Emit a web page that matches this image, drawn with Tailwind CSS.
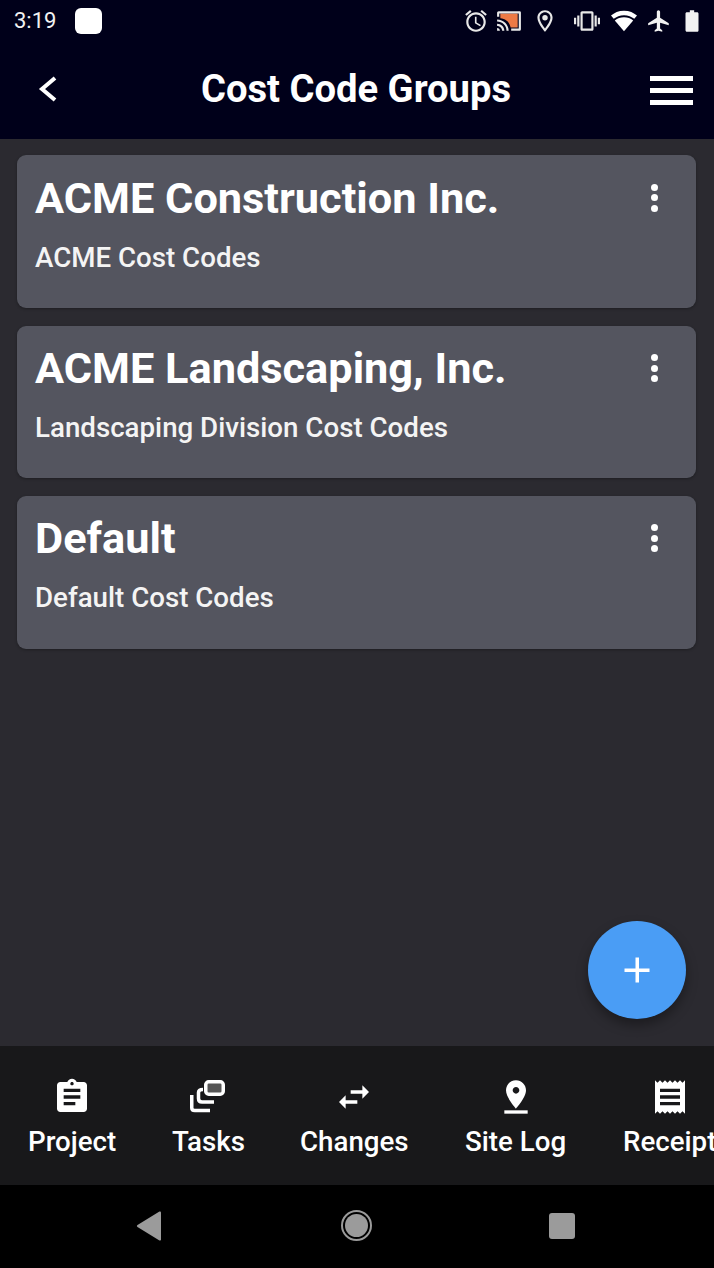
<!DOCTYPE html>
<html>
<head>
<meta charset="utf-8">
<script src="https://cdn.jsdelivr.net/npm/@tailwindcss/browser@4"></script>
</head>
<body class="m-0">
<div class="relative w-[714px] h-[1268px] overflow-hidden flex flex-col bg-[#2b2a30] font-['Roboto',sans-serif] text-white">
  <div class="h-[138.500px] bg-[#00001a] flex flex-col shrink-0">
    <div class="h-[42px] flex items-center pl-[14px] pr-[9px]">
      <span class="text-[22px] leading-none text-[#f2f2f2]">3:19</span>
      <span class="ml-[19px] w-[27px] h-[26px] rounded-[6px] bg-white"></span>
      <div class="ml-auto flex items-center">
        <svg class="w-[26px] h-[26px]" viewBox="0 0 24 24" fill="#e8e8e8"><path d="M22 5.700l-4.600-3.900-1.300 1.500 4.600 3.900L22 5.700zM7.900 3.400L6.600 1.900 2 5.700l1.300 1.500 4.600-3.800zM12.500 8H11v6l4.700 2.900.8-1.200-4-2.400V8zM12 4c-5 0-9 4-9 9s4 9 9 9 9-4 9-9-4-9-9-9zm0 16c-3.900 0-7-3.100-7-7s3.100-7 7-7 7 3.100 7 7-3.100 7-7 7z"/></svg>
        <svg class="w-[26px] h-[26px] ml-[7px]" viewBox="0 0 24 24"><path fill="#ee7a45" d="M4 5h16v13h-6.500C12.500 13 9 10 4 9.500z"/><path fill="#e8e8e8" d="M22 3H2.500C1.600 3 1 3.700 1 4.500V8h2V5h18v14h-7v2h7.500c.9 0 1.500-.7 1.500-1.500v-15C23 3.700 22.900 3 22 3zM1 18.500V21h2.600C3.600 19.600 2.500 18.500 1 18.500zm0-4v2c2.600 0 4.700 2 4.700 4.500h2C7.700 17.300 4.700 14.500 1 14.500zm0-4v2c4.800 0 8.700 3.800 8.700 8.500h2C11.700 15.200 6.900 10.500 1 10.500z"/></svg>
        <svg class="w-[26px] h-[26px] ml-[10px]" viewBox="0 0 24 24" fill="#e8e8e8"><path d="M12 2C8.100 2 5 5.100 5 9c0 5.200 7 13 7 13s7-7.800 7-13c0-3.900-3.100-7-7-7zM7 9c0-2.800 2.200-5 5-5s5 2.200 5 5c0 2.900-2.900 7.200-5 9.900C9.900 16.200 7 11.800 7 9z"/><circle cx="12" cy="9" r="2.500"/></svg>
        <svg class="w-[26px] h-[26px] ml-[16px]" viewBox="0 0 24 24" fill="#e8e8e8"><path d="M0 15h2V9H0v6zm3 2h2V7H3v10zm19-8v6h2V9h-2zm-3 8h2V7h-2v10zM16.500 3h-9C6.700 3 6 3.700 6 4.500v15c0 .8.700 1.500 1.500 1.500h9c.8 0 1.500-.7 1.500-1.500v-15c0-.8-.7-1.500-1.500-1.500zM16 19H8V5h8v14z"/></svg>
        <svg class="w-[26px] h-[26px] ml-[11px]" viewBox="0 0 24 24" fill="#ffffff"><path d="M12 21.500L20.500 11.500C18 9.500 15.300 8.500 12 8.500S6 9.500 3.500 11.500z"/><path fill-rule="evenodd" d="M12 2.500C7 2.500 3 4.300 0 7l2.500 3C5 7.900 8.300 6.600 12 6.600s7 1.300 9.500 3.400L24 7c-3-2.700-7-4.500-12-4.500z"/></svg>
        <svg class="w-[26px] h-[26px] ml-[9px]" viewBox="0 0 24 24" fill="#f2f2f2"><path d="M21 16v-2l-8-5V3.500c0-.8-.7-1.500-1.500-1.500S10 2.700 10 3.500V9l-8 5v2l8-2.500V19l-2 1.500V22l3.500-1 3.500 1v-1.500L13 19v-5.500l8 2.500z"/></svg>
        <svg class="w-[26px] h-[26px] ml-[7px]" viewBox="0 0 24 24" fill="#f2f2f2"><path d="M16.700 4H14V2h-4v2H7.300C6.600 4 6 4.600 6 5.300v15.300C6 21.400 6.600 22 7.300 22h9.400c.8 0 1.300-.6 1.300-1.300V5.300C18 4.600 17.400 4 16.700 4z"/></svg>
      </div>
    </div>
    <div class="relative flex-1 flex items-center justify-center pb-[3px] pr-[2px]">
      <svg class="absolute left-[36px] top-[33px] w-[24px] h-[28px]" viewBox="0 0 24 28" fill="none" stroke="#fff" stroke-width="4"><path d="M19 3L6 14l13 11"/></svg>
      <h1 class="text-[38.200px] leading-none font-bold">Cost Code Groups</h1>
      <div class="absolute left-[650px] top-[34px] w-[43px] flex flex-col gap-[7px]">
        <span class="h-[5px] bg-white block"></span>
        <span class="h-[5px] bg-white block"></span>
        <span class="h-[5px] bg-white block"></span>
      </div>
    </div>
  </div>

  <div class="flex-1 flex flex-col gap-[18px] pt-[16.500px] pl-[17px] pr-[18px]">
    <div class="relative h-[152.500px] bg-[#54555f] rounded-[9px] shadow-[0_1px_3px_rgba(0,0,0,0.3)] pl-[18px] pt-[19.500px]">
      <div class="text-[43.300px] leading-[48px] font-bold">ACME Construction Inc.</div>
      <div class="mt-[20px] text-[27.700px] leading-[30px] font-medium text-[#f4f4f4]">ACME Cost Codes</div>
      <div class="absolute right-[38.500px] top-[28.500px] flex flex-col gap-[3.500px]"><span class="w-[7px] h-[7px] rounded-full bg-white"></span><span class="w-[7px] h-[7px] rounded-full bg-white"></span><span class="w-[7px] h-[7px] rounded-full bg-white"></span></div>
    </div>
    <div class="relative h-[152.500px] bg-[#54555f] rounded-[9px] shadow-[0_1px_3px_rgba(0,0,0,0.3)] pl-[18px] pt-[19.500px]">
      <div class="text-[43.300px] leading-[48px] font-bold">ACME Landscaping, Inc.</div>
      <div class="mt-[20px] text-[27.700px] leading-[30px] font-medium text-[#f4f4f4]">Landscaping Division Cost Codes</div>
      <div class="absolute right-[38.500px] top-[28.500px] flex flex-col gap-[3.500px]"><span class="w-[7px] h-[7px] rounded-full bg-white"></span><span class="w-[7px] h-[7px] rounded-full bg-white"></span><span class="w-[7px] h-[7px] rounded-full bg-white"></span></div>
    </div>
    <div class="relative h-[152.500px] bg-[#54555f] rounded-[9px] shadow-[0_1px_3px_rgba(0,0,0,0.3)] pl-[18px] pt-[19px]">
      <div class="text-[43.300px] leading-[48px] font-bold">Default</div>
      <div class="mt-[20px] text-[27.700px] leading-[30px] font-medium text-[#f4f4f4]">Default Cost Codes</div>
      <div class="absolute right-[38.500px] top-[28px] flex flex-col gap-[3.500px]"><span class="w-[7px] h-[7px] rounded-full bg-white"></span><span class="w-[7px] h-[7px] rounded-full bg-white"></span><span class="w-[7px] h-[7px] rounded-full bg-white"></span></div>
    </div>
  </div>

  <div class="absolute left-[588px] top-[921px] w-[98px] h-[98px] rounded-full bg-[#4a9df5] shadow-[0_6px_12px_rgba(0,0,0,0.35)] flex items-center justify-center">
    <svg class="w-[26px] h-[26px]" viewBox="0 0 26 26" fill="#fff"><rect x="11.500" y="0.500" width="3.500" height="25"/><rect x="0.500" y="11.500" width="25" height="3.500"/></svg>
  </div>

  <div class="h-[139px] bg-[#18181a] shrink-0 relative overflow-hidden">
    <div class="absolute left-[28px] top-[31px] flex flex-col items-center">
      <svg class="w-[40px] h-[40px]" viewBox="0 0 24 24" fill="#fff"><path fill-rule="evenodd" d="M19 3h-4.200C14.400 1.800 13.300 1 12 1s-2.400.8-2.800 2H5c-1.100 0-2 .9-2 2v14c0 1.100.9 2 2 2h14c1.100 0 2-.9 2-2V5c0-1.100-.9-2-2-2zm-7 0c.6 0 1 .4 1 1s-.4 1-1 1-1-.4-1-1 .4-1 1-1zM7 7h10v2H7zm0 4h10v2H7zm0 4h7v2H7z"/></svg>
      <span class="text-[27.700px] leading-[30px] mt-[10px] font-medium">Project</span>
    </div>
    <div class="absolute left-[172px] top-[31px] flex flex-col items-center">
      <svg class="w-[40px] h-[40px]" viewBox="0 0 40 40" fill="none" stroke="#fff" stroke-width="3.500"><path d="M15 12.500c-3 0-4.500 1-4.500 3v6c0 2.500 1 3.500 3.500 3.500h12"/><path d="M3.750 18v13c0 1.500 1 2.500 3 2.500H22"/><rect x="17.750" y="4.750" width="17.500" height="12.500" rx="3" fill="#555555"/></svg>
      <span class="text-[27.700px] leading-[30px] mt-[10px] font-medium">Tasks</span>
    </div>
    <div class="absolute left-[300px] top-[31px] flex flex-col items-center">
      <svg class="w-[40px] h-[40px]" viewBox="0 0 24 24" fill="#fff"><path d="M6.990 11L3 15l3.990 4v-3H14v-2H6.990v-3zM21 9l-3.990-4v3H10v2h7.010v3L21 9z"/></svg>
      <span class="text-[27.700px] leading-[30px] mt-[10px] font-medium">Changes</span>
    </div>
    <div class="absolute left-[465px] top-[31px] flex flex-col items-center">
      <svg class="w-[40px] h-[40px]" viewBox="0 0 24 24" fill="#fff"><path fill-rule="evenodd" d="M18 8c0-3.300-2.700-6-6-6S6 4.700 6 8c0 4.500 6 11 6 11s6-6.500 6-11zm-8 0c0-1.100.9-2 2-2s2 .9 2 2-.9 2-2 2-2-.9-2-2z"/><rect x="5" y="20" width="14" height="2"/></svg>
      <span class="text-[27.700px] leading-[30px] mt-[10px] font-medium">Site Log</span>
    </div>
    <div class="absolute left-[623px] top-[31px] flex flex-col items-center">
      <svg class="w-[40px] h-[40px]" viewBox="0 0 24 24" fill="#fff"><path d="M3 22l1.500-1.500L6 22l1.500-1.500L9 22l1.500-1.500L12 22l1.500-1.500L15 22l1.500-1.500L18 22l1.500-1.500L21 22V2l-1.500 1.500L18 2l-1.500 1.500L15 2l-1.500 1.500L12 2l-1.500 1.500L9 2 7.500 3.500 6 2 4.500 3.500 3 2v20zM6 7h12v2H6V7zm0 4h12v2H6v-2zm0 4h12v2H6v-2z"/></svg>
      <span class="text-[27.700px] leading-[30px] mt-[10px] font-medium">Receipt</span>
    </div>
  </div>

  <div class="h-[83px] bg-black shrink-0 relative flex items-center">
    <svg class="absolute left-[136px] top-[26px] w-[26px] h-[30px]" viewBox="0 0 26 30" fill="#9b9b9b"><path d="M25 1.500c0-1-1-1.400-2-.8L1.500 14c-.8.500-.8 1.500 0 2L23 29.300c1 .6 2 .2 2-.8z"/></svg>
    <div class="absolute left-[341px] top-[25px] w-[31px] h-[31px] rounded-full border-2 border-[#9b9b9b] p-[2px]"><div class="w-full h-full rounded-full bg-[#9b9b9b]"></div></div>
    <div class="absolute left-[549px] top-[28px] w-[26px] h-[26px] rounded-[3px] bg-[#9b9b9b]"></div>
  </div>
</div>
</body>
</html>
